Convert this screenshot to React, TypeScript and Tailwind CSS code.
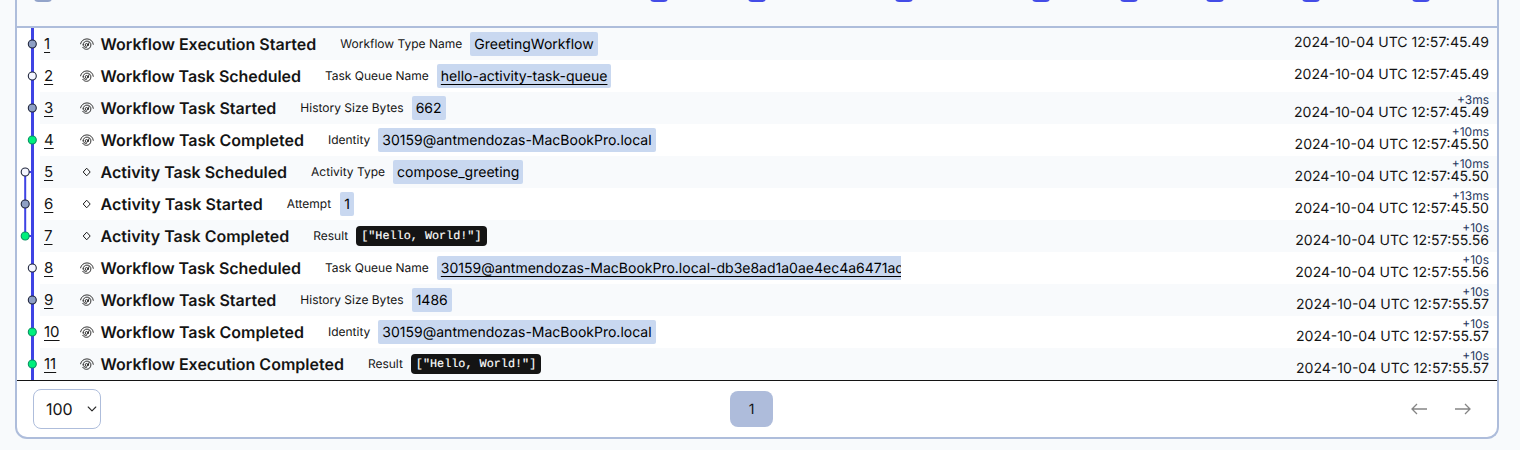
import React from "react";

type Kind = "chip" | "link" | "code";
type Dot = "gray" | "white" | "green";

interface Event {
  id: number;
  title: string;
  label: string;
  value: string;
  kind: Kind;
  dot: Dot;
  delta?: string;
  time: string;
}

const events: Event[] = [
  { id: 1, title: "Workflow Execution Started", label: "Workflow Type Name", value: "GreetingWorkflow", kind: "chip", dot: "gray", time: "45.49" },
  { id: 2, title: "Workflow Task Scheduled", label: "Task Queue Name", value: "hello-activity-task-queue", kind: "link", dot: "white", time: "45.49" },
  { id: 3, title: "Workflow Task Started", label: "History Size Bytes", value: "662", kind: "chip", dot: "gray", delta: "+3ms", time: "45.49" },
  { id: 4, title: "Workflow Task Completed", label: "Identity", value: "30159@antmendozas-MacBookPro.local", kind: "chip", dot: "green", delta: "+10ms", time: "45.50" },
  { id: 5, title: "Activity Task Scheduled", label: "Activity Type", value: "compose_greeting", kind: "chip", dot: "white", delta: "+10ms", time: "45.50" },
  { id: 6, title: "Activity Task Started", label: "Attempt", value: "1", kind: "chip", dot: "gray", delta: "+13ms", time: "45.50" },
  { id: 7, title: "Activity Task Completed", label: "Result", value: '["Hello, World!"]', kind: "code", dot: "green", delta: "+10s", time: "55.56" },
  { id: 8, title: "Workflow Task Scheduled", label: "Task Queue Name", value: "30159@antmendozas-MacBookPro.local-db3e8ad1a0ae4ec4a6471ac8", kind: "link", dot: "white", delta: "+10s", time: "55.56" },
  { id: 9, title: "Workflow Task Started", label: "History Size Bytes", value: "1486", kind: "chip", dot: "gray", delta: "+10s", time: "55.57" },
  { id: 10, title: "Workflow Task Completed", label: "Identity", value: "30159@antmendozas-MacBookPro.local", kind: "chip", dot: "green", delta: "+10s", time: "55.57" },
  { id: 11, title: "Workflow Execution Completed", label: "Result", value: '["Hello, World!"]', kind: "code", dot: "green", delta: "+10s", time: "55.57" },
];

const dotFill: Record<Dot, string> = { gray: "#8fa0c4", white: "#f4f6ff", green: "#00f07c" };
const dotStroke: Record<Dot, string> = { gray: "#20263c", white: "#20263c", green: "#0c8f63" };

const isActivity = (e: Event) => e.title.startsWith("Activity");

function Timeline() {
  return (
    <svg width="23" height="352" viewBox="0 0 23 352" className="block shrink-0">
      <rect x="14" y="0" width="3" height="352" fill="#3f44e4" />
      <path d="M8.2 144V208M8.2 144H15M8.2 208H15" stroke="#3f44e4" strokeWidth="2" fill="none" />
      {events.map((e, i) => (
        <circle key={e.id} cx={isActivity(e) ? 8.2 : 15.3} cy={16 + i * 32} r="4" fill={dotFill[e.dot]} stroke={dotStroke[e.dot]} strokeWidth="1.1" />
      ))}
    </svg>
  );
}

function WorkflowIcon() {
  return (
    <svg width="14" height="12" viewBox="0 0 14 12" fill="none" stroke="#1c1c1c" strokeWidth=".9" strokeLinecap="round" className="block">
      <circle cx="6.6" cy="6.900" r="1.400" />
      <path d="M8.900 4.700 8.200 7.500" />
      <path d="M3.100 6.700C3.200 4.500 4.900 3.100 7 3.100 9.400 3.100 11 4.800 10.900 7 10.800 9.600 8.900 11.300 6.500 11.300 4.900 11.300 3.500 10.500 2.700 9.300" />
      <path d="M3.100 6.700C3 8.300 4.600 9.500 6.300 9.500" />
      <path d="M.5 5.900C1.300 2.700 3.900.9 7 .9 10.300.9 12.900 3.100 13.300 6.300" />
    </svg>
  );
}

function ActivityIcon() {
  return (
    <svg width="14" height="12" viewBox="0 0 14 12" fill="none" stroke="#1c1c1c" strokeWidth="1" className="block">
      <path d="M6.700 2.200 10.200 6 6.700 9.800 3.200 6Z" strokeLinejoin="round" />
    </svg>
  );
}

function Value({ event }: { event: Event }) {
  if (event.kind === "code") {
    return (
      <span className="ml-2 flex h-5 items-center rounded-[4px] bg-[#141414] px-[5px] pt-[2px] font-['Liberation_Mono',monospace] text-[11.8px] whitespace-pre text-white [-webkit-text-stroke:0.15px_white]">
        {event.value}
      </span>
    );
  }
  return (
    <span className={"flex h-6 items-center rounded-[2px] bg-[#c9d8f0] px-1 text-[14px] whitespace-nowrap text-black " + (event.value === "1" ? "ml-[9px]" : "ml-2")}>
      <span className={event.kind === "link" ? "underline underline-offset-[3px]" : ""}>{event.value}</span>
    </span>
  );
}

function Row({ event }: { event: Event }) {
  return (
    <div className="flex h-8 items-center justify-between bg-white pr-2 pl-1 odd:bg-[#f8fafc]">
      <div className="flex w-[857px] items-center overflow-hidden">
        <span className="w-9 shrink-0 text-[15px] underline underline-offset-[3px]">{event.id}</span>
        <span className="w-[20.6px] shrink-0">{isActivity(event) ? <ActivityIcon /> : <WorkflowIcon />}</span>
        <span
          className={
            "shrink-0 text-[16px] font-semibold whitespace-nowrap " +
            (event.title === "Activity Task Started" ? "tracking-[0.06px]" : event.title === "Workflow Task Scheduled" ? "tracking-[-0.04px]" : "")
          }
        >
          {event.title}
        </span>
        <span className="ml-6 shrink-0 text-[12px] whitespace-nowrap">{event.label}</span>
        <Value event={event} />
      </div>
      <div className="flex flex-col items-end pb-1">
        {event.delta && <span className="text-[12px] leading-[12px] text-[#273860]">{event.delta}</span>}
        <span className="text-[14.05px] leading-[13px]">2024-10-04 UTC 12:57:{event.time}</span>
      </div>
    </div>
  );
}

function HeaderStub({ className }: { className: string }) {
  return <span className={"-mt-[14px] h-4 w-[18px] shrink-0 rounded-[4px] " + className} />;
}

export default function App() {
  return (
    <div className="h-[450px] w-[1520px] overflow-hidden bg-[#f8fafc] pl-[15px] font-['Inter',sans-serif] text-[#141414] [text-rendering:geometricPrecision]">
      <div className="flex h-[439px] w-[1484px] flex-col overflow-hidden rounded-b-[12px] border-2 border-t-0 border-[#aebddb] bg-white">
        <div className="flex h-7 shrink-0 border-b-2 border-[#aebddb] bg-[#f8fafc] pl-[17px]">
          <HeaderStub className="bg-[#93a4ca]" />
          <HeaderStub className="ml-[598px] bg-[#444ce7]" />
          <HeaderStub className="ml-[80px] bg-[#444ce7]" />
          <HeaderStub className="ml-[129px] bg-[#444ce7]" />
          <HeaderStub className="ml-[119px] bg-[#444ce7]" />
          <HeaderStub className="ml-[70px] bg-[#444ce7]" />
          <HeaderStub className="ml-[68px] bg-[#444ce7]" />
          <HeaderStub className="ml-[78px] bg-[#444ce7]" />
          <HeaderStub className="ml-[92px] bg-[#444ce7]" />
        </div>
        <div className="flex shrink-0">
          <Timeline />
          <div className="grow">
            {events.map((e) => (
              <Row key={e.id} event={e} />
            ))}
          </div>
        </div>
        <div className="grid grow grid-cols-3 items-center border-t border-[#141414] pr-[26px] pl-4">
          <div className="flex h-10 w-[68px] items-center justify-between rounded-[8px] border border-[#aebddb] pr-[3px] pl-3 text-[16px]">
            100
            <svg width="10" height="10" viewBox="0 0 10 10" fill="none" stroke="#2a2a2a" strokeWidth="1.1" strokeLinecap="round" strokeLinejoin="round">
              <path d="M1.200 3 5 6.800 8.800 3" />
            </svg>
          </div>
          <div className="mr-px flex h-9 w-[43px] items-center justify-center justify-self-center rounded-[8px] bg-[#aebcdb] text-[14px]">1</div>
          <div className="flex gap-7 justify-self-end">
            <svg width="16" height="12" viewBox="0 0 16 12" fill="none" stroke="#858585" strokeWidth="1.300">
              <path d="M16 6H1M6 1 1 6 6 11" />
            </svg>
            <svg width="16" height="12" viewBox="0 0 16 12" fill="none" stroke="#858585" strokeWidth="1.300">
              <path d="M0 6H15M10 1 15 6 10 11" />
            </svg>
          </div>
        </div>
      </div>
    </div>
  );
}
